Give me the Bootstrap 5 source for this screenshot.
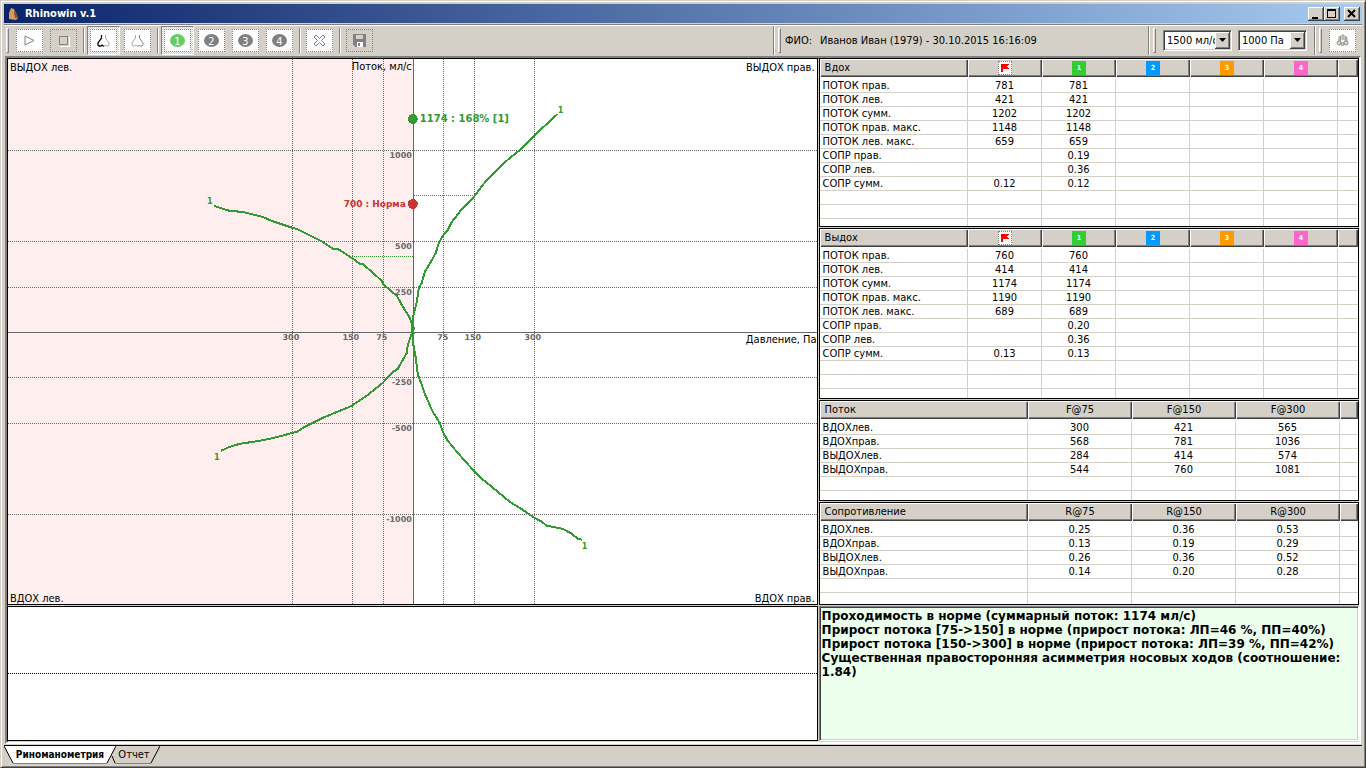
<!DOCTYPE html>
<html lang="ru">
<head>
<meta charset="utf-8">
<meta name="viewport" content="width=device-width, initial-scale=1">
<title>Rhinowin v.1</title>
<link href="https://cdn.jsdelivr.net/npm/bootstrap@5.3.0/dist/css/bootstrap.min.css" rel="stylesheet">
<style>
:root{--face:#d4d0c8;--shade:#808080;--dark:#404040}
body{font-family:"DejaVu Sans Condensed","DejaVu Sans",sans-serif;font-stretch:condensed;font-size:11px;line-height:13px;color:#000;background:var(--face)}
.window{height:100vh;min-height:600px;background:var(--face);border:1px solid;border-color:var(--face) var(--dark) var(--dark) var(--face);box-shadow:inset 1px 1px #fff,inset -1px -1px var(--shade);padding:3px}
.titlebar{height:19px;flex:none;background:linear-gradient(90deg,#0a246a,#a6caf0);color:#fff;padding:0 2px 0 3px}
.titlebar h1{font-size:11px;line-height:19px;font-weight:bold}
.cap{width:16px;height:14px;padding:0;border:0;background:var(--face);box-shadow:inset -1px -1px var(--dark),inset 1px 1px #fff,inset -2px -2px var(--shade)}
.toolbar{height:32px;flex:none;border-top:1px solid var(--shade);box-shadow:inset 0 1px #fff;margin-top:1px;padding:1px 6px 1px 2px}
.grip{width:3px;height:25px;border:1px solid;border-color:#fff var(--shade) var(--shade) #fff;margin-right:7px}
.divide{width:2px;height:25px;border-left:1px solid var(--shade);border-right:1px solid #fff;margin:0 5px 0 6px}
.divide.tall{height:29px;margin:0 3px 0 7px}
.tool{width:27px;height:23px;padding:0;background:#fff;border:1px dotted var(--shade);border-radius:0}
.tool.off{background:transparent}
.tool+.tool,.pressed+.tool{margin-left:7px}
.pressed{padding:2px;border:1px solid;border-color:var(--shade) #fff #fff var(--shade);background:repeating-conic-gradient(#fff 0 25%,var(--face) 0 50%) 0 0/2px 2px;margin:0 -3px}
.patient{width:356px}
.combo{height:21px;width:69px;background:#fff;border:1px solid;border-color:var(--shade) #fff #fff var(--shade);box-shadow:inset 1px 1px var(--dark),inset -1px -1px var(--face);padding:2px}
.combo+.combo{margin-left:6px}
.combo select{display:block;appearance:none;width:100%;height:15px;border:0;border-radius:0;background:transparent;padding:0 13px 0 1px;font-size:11px;line-height:15px;color:#000}
.combo svg{top:1px;right:1px;pointer-events:none;background:var(--face);box-shadow:inset -1px -1px var(--dark),inset 1px 1px #fff,inset -2px -2px var(--shade)}
.client{display:grid;grid-template-columns:minmax(0,3fr) minmax(0,2fr);grid-template-rows:minmax(0,1fr) 135px;gap:1px;min-height:0;border:2px solid;border-color:var(--shade) #fff #fff var(--shade);margin:0 1px;padding-bottom:1px;box-shadow:inset 1px 1px var(--dark)}
.pane{background:#fff;border:1px solid #000;min-height:0;overflow:hidden}
.tables{display:grid;grid-template-rows:minmax(0,169fr) minmax(0,171fr) minmax(0,101fr) minmax(0,103fr);gap:1px;min-height:0}
.grid-table{width:100%;table-layout:fixed;border-collapse:separate;border-spacing:0}
.grid-table th{height:18px;padding:0 5px;font-weight:normal;background:var(--face);box-shadow:inset 1px 1px #fff,inset -1px -1px var(--dark),inset -2px -2px var(--shade);line-height:18px;text-align:center}
.grid-table th:first-child{text-align:left}
.grid-table td{height:14px;line-height:13px;padding:0 3px;border-bottom:1px solid var(--face);border-right:1px solid var(--face);text-align:center;white-space:nowrap}
.grid-table td:first-child{text-align:left}
.grid-table td:last-child{border-right:0}
.grid-table tbody::before{content:"";display:table-row;height:2px}
.w-n{width:74px}.w-f{width:104px}.w-end{width:20px}.w-edge{width:18px}
.chip{display:block;width:14px;height:14px;margin:0 auto;color:#fff;font-size:7px;line-height:14px;font-weight:bold}
.c1{background:#3c3}.c2{background:#09f}.c3{background:#f90}.c4{background:#f6c}
.cf{background:#fff;border:1px dotted var(--shade)}
.report{background:#ecffec;border:1px solid;border-color:var(--shade) #fff #fff var(--shade);box-shadow:inset 1px 1px var(--dark),inset -1px -1px var(--face);font-family:"DejaVu Sans",sans-serif;font-stretch:normal;font-size:12px;line-height:14px;font-weight:bold;padding:2px;overflow:hidden}
.midline{border-top:1px dotted #000}
.tabs{height:19px;flex:none;border-top:1px solid #000;margin-top:1px}
.sheet{height:18px;border:0;background:transparent;padding:0;font-size:11px;line-height:18px}
.sheet svg{inset:0;width:100%;height:100%}
.sheet.on{width:112px;font-weight:bold;font-size:10px;z-index:1}
.sheet.next{width:52px;margin-left:-8px}
svg text{font-size:11px}
svg .tick{font-family:"DejaVu Sans",sans-serif;font-stretch:normal;font-size:8px;font-weight:bold;fill:#666}
svg .mark1{font-weight:bold;font-size:9px;fill:#393}
svg .note{font-family:"DejaVu Sans",sans-serif;font-stretch:normal;font-size:10px;font-weight:bold}
svg .norm{font-size:9px}
</style>
</head>
<body>
<div class="window d-flex flex-column">
  <header class="titlebar d-flex align-items-center">
    <svg width="14" height="14" viewBox="0 0 14 14" aria-hidden="true"><path d="M4 1L7 2L9 6L11 11L9 13L2 12L2 6Z" fill="#d69a62"/><path d="M7 2L9 6L11 11L8 11L7 7Z" fill="#8a5430"/></svg>
    <h1 class="m-0 ms-1 flex-grow-1">Rhinowin v.1</h1>
    <button class="cap" aria-label="Свернуть"><svg class="d-block" width="16" height="14"><path d="M4 10h6v2H4z"/></svg></button>
    <button class="cap" aria-label="Развернуть"><svg class="d-block" width="16" height="14" shape-rendering="crispEdges"><path d="M3 2h9v9H3zM4 4v6h7V4z" fill-rule="evenodd"/></svg></button>
    <button class="cap ms-1" aria-label="Закрыть"><svg class="d-block" width="16" height="14"><path d="M4 3L11 10M11 3L4 10" stroke="#000" stroke-width="2"/></svg></button>
  </header>

  <div class="toolbar d-flex align-items-center">
    <span class="grip"></span>
    <button class="tool" aria-label="Старт"><svg class="d-block mx-auto" width="15" height="15"><path d="M3 3L12 7.500L3 12Z" fill="none" stroke="#808080"/></svg></button>
    <button class="tool off" aria-label="Стоп"><svg class="d-block mx-auto" width="15" height="15" shape-rendering="crispEdges"><path d="M4 13h9V4" fill="none" stroke="#fff"/><path d="M3.500 3.500h8v8h-8z" fill="none" stroke="#808080"/></svg></button>
    <span class="divide"></span>
    <span class="pressed"><button class="tool d-block" aria-label="Левая сторона"><svg class="d-block mx-auto" width="15" height="15" fill="none"><path d="M5.500 2V5L2 10V12L3 13H5L6 12L8 13.500" stroke="#000" stroke-width="1.300"/><path d="M9.500 2V5L13 10V12L12 13H10L9 12L8 13.500" stroke="#aaa"/></svg></button></span>
    <button class="tool" aria-label="Правая сторона"><svg class="d-block mx-auto" width="15" height="15" fill="none"><path d="M5.500 2V5L2 10V12L3 13H5L6 12L8 13.500" stroke="#aaa"/><path d="M9.500 2V5L13 10V12L12 13H10L9 12L8 13.500" stroke="#888"/></svg></button>
    <span class="divide"></span>
    <span class="pressed"><button class="tool d-block" aria-label="Проба 1"><svg class="d-block mx-auto" width="17" height="15"><ellipse cx="8.500" cy="7.500" rx="7.500" ry="6.500" fill="#6c6"/><text x="8.500" y="11.500" text-anchor="middle" fill="#fff">1</text></svg></button></span>
    <button class="tool" aria-label="Проба 2"><svg class="d-block mx-auto" width="17" height="15"><ellipse cx="8.500" cy="7.500" rx="7.500" ry="6.500" fill="#808080"/><text x="8.500" y="11.500" text-anchor="middle" fill="#fff">2</text></svg></button>
    <button class="tool" aria-label="Проба 3"><svg class="d-block mx-auto" width="17" height="15"><ellipse cx="8.500" cy="7.500" rx="7.500" ry="6.500" fill="#808080"/><text x="8.500" y="11.500" text-anchor="middle" fill="#fff">3</text></svg></button>
    <button class="tool" aria-label="Проба 4"><svg class="d-block mx-auto" width="17" height="15"><ellipse cx="8.500" cy="7.500" rx="7.500" ry="6.500" fill="#808080"/><text x="8.500" y="11.500" text-anchor="middle" fill="#fff">4</text></svg></button>
    <span class="divide"></span>
    <button class="tool" aria-label="Удалить"><svg class="d-block mx-auto" width="15" height="15"><path d="M2 4L4 2L7.500 5.500L11 2L13 4L9.500 7.500L13 11L11 13L7.500 9.500L4 13L2 11L5.500 7.500Z" fill="#fff" stroke="#808080"/></svg></button>
    <span class="divide"></span>
    <button class="tool off" aria-label="Сохранить"><svg class="d-block mx-auto" width="15" height="15" shape-rendering="crispEdges"><path d="M1 1h13v13H3L1 12z" fill="#808080"/><path d="M4 2h7v4H4z" fill="#d4d0c8"/><path d="M5 9h6v5H5z" fill="#fff"/><path d="M6 10h2v3H6z" fill="#808080"/></svg></button>
    <span class="divide tall ms-auto"></span>
    <span class="grip me-1"></span>
    <div class="patient"><span>ФИО:</span><span class="ms-2">Иванов Иван (1979) - 30.10.2015 16:16:09</span></div>
    <span class="divide tall"></span>
    <span class="grip"></span>
    <div class="combo position-relative"><select aria-label="Шкала потока"><option>1500 мл/с</option><option>1000 мл/с</option></select><svg class="position-absolute" width="15" height="17"><path d="M4 6h7L7.500 10z"/></svg></div>
    <div class="combo position-relative"><select aria-label="Шкала давления"><option>1000 Па</option><option>500 Па</option></select><svg class="position-absolute" width="15" height="17"><path d="M4 6h7L7.500 10z"/></svg></div>
    <span class="divide tall"></span>
    <span class="grip"></span>
    <button class="tool" aria-label="Настройки"><svg class="d-block mx-auto" width="15" height="15" fill="#ddd" stroke="#888"><path d="M4 8V4L5.500 3V8M7 7V2H9V7M10.500 8V3L12 5V9" stroke="#999"/><circle cx="4" cy="10" r="2"/><circle cx="11" cy="10" r="2"/><circle cx="7.500" cy="11" r="1.500"/><path d="M3 7h2M9 7h2" stroke="#b8b860"/></svg></button>
  </div>

  <main class="client flex-grow-1">
    <section class="pane" aria-label="График поток-давление">
      <svg class="d-block w-100 h-100" viewBox="8 59 809 545" preserveAspectRatio="xMinYMin meet">
        <path d="M8 59h405v545H8z" fill="#fee"/>
        <g shape-rendering="crispEdges" fill="none">
          <path d="M292.500 59V604M352.500 59V604M383.500 59V604M443.500 59V604M474.500 59V604M534.500 59V604M8 150.500H817M8 241.500H817M8 287.500H817M8 377.500H817M8 423.500H817M8 514.500H817" stroke="#666" stroke-dasharray="1 1"/>
          <path d="M8 332.500H817M413.500 59V604" stroke="#666"/>
          <path d="M352 256.500H413M414 195.500H474" stroke="#393" stroke-dasharray="1 1"/>
          <g stroke="#393" stroke-width="2">
            <path d="M214 206L230 211L243 212L263 217L272 221L293 228L297 229L323 242L333 249L338 249L352 258L360 264L363 264L373 273L382 281L384 285L397 296L402 305L410 318L413 327L414 334"/>
            <path d="M558 114L552 119L547 124L535 135L519 151L510 158L500 167L489 178L483 185L474 197L463 208L452 222L448 230L443 236L439 243L436 253L431 262L425 272L422 283L419 288L417 302L415 310L413 318L414 330"/>
            <path d="M221 451L230 447L240 444L260 441L274 438L297 432L303 428L313 423L323 418L352 406L368 395L383 383L392 373L398 369L403 360L407 353L408 345L412 333L413 322"/>
            <path d="M413 324L413 340L414 348L416 358L418 375L422 385L425 394L429 403L433 412L440 423L443 432L448 441L458 453L465 461L475 472L482 479L492 487L510 502L523 510L533 517L542 522L547 526L563 529L572 534L578 539L582 540"/>
          </g>
          <circle cx="413" cy="119" r="5" fill="#393"/><circle cx="413" cy="204" r="5" fill="#c33"/>
        </g>
        <g><text x="10" y="71">ВЫДОХ лев.</text><text x="10" y="602">ВДОХ лев.</text>
        <text x="815" y="71" text-anchor="end">ВЫДОХ прав.</text><text x="815" y="602" text-anchor="end">ВДОХ прав.</text>
        <text x="412" y="70" text-anchor="end">Поток, мл/с</text><text x="817" y="343" text-anchor="end">Давление, Па</text></g>
        <g text-anchor="end"><text class="tick" x="412" y="158">1000</text><text class="tick" x="412" y="249">500</text><text class="tick" x="412" y="295">250</text><text class="tick" x="412" y="385">-250</text><text class="tick" x="412" y="431">-500</text><text class="tick" x="412" y="522">-1000</text></g>
        <g text-anchor="middle"><text class="tick" x="291" y="340">300</text><text class="tick" x="351" y="340">150</text><text class="tick" x="382" y="340">75</text><text class="tick" x="443" y="340">75</text><text class="tick" x="473" y="340">150</text><text class="tick" x="533" y="340">300</text></g>
        <g fill="#393"><text class="note" x="420" y="122">1174 : 168% [1]</text><text class="mark1" x="207" y="204">1</text><text class="mark1" x="558" y="113">1</text><text class="mark1" x="214" y="460">1</text><text class="mark1" x="582" y="549">1</text></g>
        <text class="note norm" x="406" y="207" fill="#c33" text-anchor="end">700 : Норма</text>
      </svg>
    </section>

    <div class="tables">
      <div class="pane">
        <table class="grid-table">
          <colgroup><col><col class="w-n"><col class="w-n"><col class="w-n"><col class="w-n"><col class="w-n"><col class="w-end"></colgroup>
          <thead><tr><th>Вдох</th><th><span class="chip cf"><svg class="d-block" width="12" height="12" shape-rendering="crispEdges"><path d="M2 2h8l-2 2l2 3H4v3H2z" fill="red"/></svg></span></th><th><span class="chip c1">1</span></th><th><span class="chip c2">2</span></th><th><span class="chip c3">3</span></th><th><span class="chip c4">4</span></th><th></th></tr></thead>
          <tbody>
            <tr><td>ПОТОК прав.</td><td>781</td><td>781</td><td></td><td></td><td></td><td></td></tr>
            <tr><td>ПОТОК лев.</td><td>421</td><td>421</td><td></td><td></td><td></td><td></td></tr>
            <tr><td>ПОТОК сумм.</td><td>1202</td><td>1202</td><td></td><td></td><td></td><td></td></tr>
            <tr><td>ПОТОК прав. макс.</td><td>1148</td><td>1148</td><td></td><td></td><td></td><td></td></tr>
            <tr><td>ПОТОК лев. макс.</td><td>659</td><td>659</td><td></td><td></td><td></td><td></td></tr>
            <tr><td>СОПР прав.</td><td></td><td>0.19</td><td></td><td></td><td></td><td></td></tr>
            <tr><td>СОПР лев.</td><td></td><td>0.36</td><td></td><td></td><td></td><td></td></tr>
            <tr><td>СОПР сумм.</td><td>0.12</td><td>0.12</td><td></td><td></td><td></td><td></td></tr>
            <tr><td></td><td></td><td></td><td></td><td></td><td></td><td></td></tr>
            <tr><td></td><td></td><td></td><td></td><td></td><td></td><td></td></tr>
            <tr><td></td><td></td><td></td><td></td><td></td><td></td><td></td></tr>
          </tbody>
        </table>
      </div>
      <div class="pane">
        <table class="grid-table">
          <colgroup><col><col class="w-n"><col class="w-n"><col class="w-n"><col class="w-n"><col class="w-n"><col class="w-end"></colgroup>
          <thead><tr><th>Выдох</th><th><span class="chip cf"><svg class="d-block" width="12" height="12" shape-rendering="crispEdges"><path d="M2 2h8l-2 2l2 3H4v3H2z" fill="red"/></svg></span></th><th><span class="chip c1">1</span></th><th><span class="chip c2">2</span></th><th><span class="chip c3">3</span></th><th><span class="chip c4">4</span></th><th></th></tr></thead>
          <tbody>
            <tr><td>ПОТОК прав.</td><td>760</td><td>760</td><td></td><td></td><td></td><td></td></tr>
            <tr><td>ПОТОК лев.</td><td>414</td><td>414</td><td></td><td></td><td></td><td></td></tr>
            <tr><td>ПОТОК сумм.</td><td>1174</td><td>1174</td><td></td><td></td><td></td><td></td></tr>
            <tr><td>ПОТОК прав. макс.</td><td>1190</td><td>1190</td><td></td><td></td><td></td><td></td></tr>
            <tr><td>ПОТОК лев. макс.</td><td>689</td><td>689</td><td></td><td></td><td></td><td></td></tr>
            <tr><td>СОПР прав.</td><td></td><td>0.20</td><td></td><td></td><td></td><td></td></tr>
            <tr><td>СОПР лев.</td><td></td><td>0.36</td><td></td><td></td><td></td><td></td></tr>
            <tr><td>СОПР сумм.</td><td>0.13</td><td>0.13</td><td></td><td></td><td></td><td></td></tr>
            <tr><td></td><td></td><td></td><td></td><td></td><td></td><td></td></tr>
            <tr><td></td><td></td><td></td><td></td><td></td><td></td><td></td></tr>
            <tr><td></td><td></td><td></td><td></td><td></td><td></td><td></td></tr>
          </tbody>
        </table>
      </div>
      <div class="pane">
        <table class="grid-table">
          <colgroup><col><col class="w-f"><col class="w-f"><col class="w-f"><col class="w-edge"></colgroup>
          <thead><tr><th>Поток</th><th>F@75</th><th>F@150</th><th>F@300</th><th></th></tr></thead>
          <tbody>
            <tr><td>ВДОХлев.</td><td>300</td><td>421</td><td>565</td><td></td></tr>
            <tr><td>ВДОХправ.</td><td>568</td><td>781</td><td>1036</td><td></td></tr>
            <tr><td>ВЫДОХлев.</td><td>284</td><td>414</td><td>574</td><td></td></tr>
            <tr><td>ВЫДОХправ.</td><td>544</td><td>760</td><td>1081</td><td></td></tr>
            <tr><td></td><td></td><td></td><td></td><td></td></tr>
            <tr><td></td><td></td><td></td><td></td><td></td></tr>
          </tbody>
        </table>
      </div>
      <div class="pane">
        <table class="grid-table">
          <colgroup><col><col class="w-f"><col class="w-f"><col class="w-f"><col class="w-edge"></colgroup>
          <thead><tr><th>Сопротивление</th><th>R@75</th><th>R@150</th><th>R@300</th><th></th></tr></thead>
          <tbody>
            <tr><td>ВДОХлев.</td><td>0.25</td><td>0.36</td><td>0.53</td><td></td></tr>
            <tr><td>ВДОХправ.</td><td>0.13</td><td>0.19</td><td>0.29</td><td></td></tr>
            <tr><td>ВЫДОХлев.</td><td>0.26</td><td>0.36</td><td>0.52</td><td></td></tr>
            <tr><td>ВЫДОХправ.</td><td>0.14</td><td>0.20</td><td>0.28</td><td></td></tr>
            <tr><td></td><td></td><td></td><td></td><td></td></tr>
            <tr><td></td><td></td><td></td><td></td><td></td></tr>
          </tbody>
        </table>
      </div>
    </div>

    <section class="pane d-flex align-items-center" aria-label="Кривая дыхания"><div class="midline w-100"></div></section>
    <section class="report">
      <div>Проходимость в норме (суммарный поток: 1174 мл/с)</div>
      <div>Прирост потока [75-&gt;150] в норме (прирост потока: ЛП=46 %, ПП=40%)</div>
      <div>Прирост потока [150-&gt;300] в норме (прирост потока: ЛП=39 %, ПП=42%)</div>
      <div>Существенная правосторонняя асимметрия носовых ходов (соотношение: 1.84)</div>
    </section>
  </main>

  <nav class="tabs d-flex align-items-start">
    <button class="sheet on position-relative"><svg class="position-absolute" viewBox="0 0 112 18" preserveAspectRatio="none"><path d="M0 0L9 17H103L112 0" fill="#fff"/><path d="M0 0L9 17M103 17L112 0" stroke="#000"/><path d="M9 17.500H103" stroke="#808080"/></svg><span class="position-relative">Риноманометрия</span></button>
    <button class="sheet next position-relative"><svg class="position-absolute" viewBox="0 0 52 18" preserveAspectRatio="none" fill="none"><path d="M4 10L7 17M43 17L52 0" stroke="#000"/><path d="M7 17.500H43" stroke="#808080"/></svg><span class="position-relative">Отчет</span></button>
  </nav>
</div>
<script src="https://cdn.jsdelivr.net/npm/bootstrap@5.3.0/dist/js/bootstrap.bundle.min.js"></script>
</body>
</html>
